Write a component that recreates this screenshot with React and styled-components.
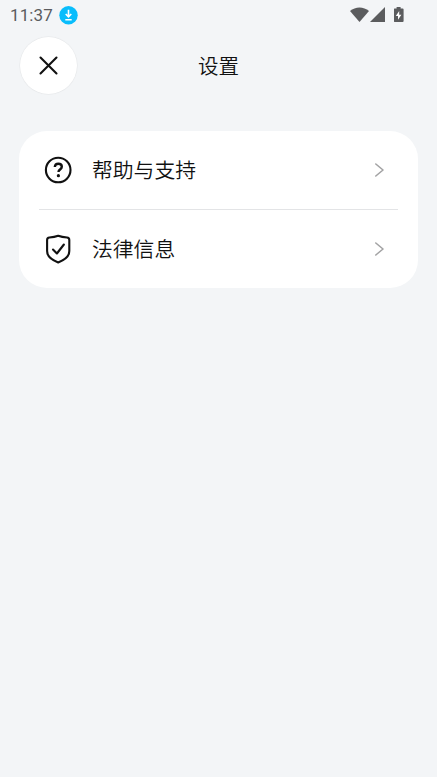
import styled, { createGlobalStyle } from "styled-components";

const GlobalStyle = createGlobalStyle`
	* {
		box-sizing: border-box;
	}
	body {
		margin: 0;
		background-color: #f3f5f7;
		font-family: "Noto Sans CJK SC", sans-serif;
	}
`;

const Container = styled.div`
	min-height: 100vh;
	background-color: #f3f5f7;
	color: #111;
`;
const StatusBar = styled.div`
	height: 30px;
	padding: 0 33px 0 10px;
	display: flex;
	justify-content: space-between;
	align-items: center;
`;
const StatusGroup = styled.div`
	display: flex;
	align-items: center;
`;
const Time = styled.span`
	width: 49px;
	font-family: Roboto, sans-serif;
	font-size: 17px;
	line-height: 20px;
	letter-spacing: 0.1px;
	color: #5b5c5e;
`;
const StatusIcon = styled.svg`
	display: block;
	margin-left: ${(props) => props.$gap || 0}px;
`;
const Header = styled.header`
	height: 71px;
	padding: 0 20px;
	display: grid;
	grid-template-columns: 57px 1fr 57px;
	align-items: center;
`;
const CloseButton = styled.button`
	width: 57px;
	height: 57px;
	padding: 0;
	display: flex;
	justify-content: center;
	align-items: center;
	border: none;
	border-radius: 50%;
	background-color: white;
	box-shadow: 0 0 1px 0.5px rgba(0, 0, 0, 0.07);
	color: #111;
	cursor: pointer;
`;
const Title = styled.h1`
	margin: 0;
	padding-bottom: 2px;
	text-align: center;
	font-size: 20.5px;
	font-weight: 350;
	line-height: 30px;
`;
const Card = styled.main`
	margin: 30px 19px 0;
	padding: 0 20px;
	border-radius: 28px;
	background-color: white;
`;
const Row = styled.div`
	height: 78px;
	padding: 0 12px 0 5px;
	display: flex;
	align-items: center;
	cursor: pointer;
`;
const Divider = styled.div`
	height: 1px;
	background-color: #e3e4e6;
`;
const Label = styled.span`
	flex: 1;
	margin-left: 20px;
	padding-bottom: 2px;
	font-size: 20.8px;
	font-weight: 350;
	line-height: 30px;
`;
const Icon = styled.svg`
	display: block;
	fill: none;
	stroke: currentColor;
	stroke-linecap: round;
	stroke-linejoin: round;
`;

const CloseIcon = () => (
	<Icon width="19" height="19" viewBox="0 0 19 19" strokeWidth="2.1">
		<path d="M1.5 1.5l16 16M17.5 1.5l-16 16" />
	</Icon>
);

const HelpIcon = () => (
	<Icon width="28" height="28" viewBox="-1 0 28 28" strokeWidth="2.1">
		<circle cx="13.2" cy="14" r="12.3" />
		<path
			d="M9.8 11C10 8.9 11.4 7.8 13.3 7.8c2.1 0 3.5 1.2 3.5 3 0 2.700-3.300 2.700-3.300 5.100"
			strokeWidth="2.4"
			strokeLinecap="butt"
		/>
		<circle cx="13.4" cy="19.7" r="1.6" fill="currentColor" stroke="none" />
	</Icon>
);

const ShieldIcon = () => (
	<Icon width="28" height="30" viewBox="-1 0 28 30" strokeWidth="2.1">
		<path d="M13.2 1.8c2.800 1 6 1.500 8.800 1.700 1.500.1 2.300 1 2.300 2.400v11.200c0 5.500-4.900 9-11.100 11.300C7 26.100 2.100 22.600 2.100 17.100V5.900c0-1.400.8-2.300 2.300-2.400 2.800-.2 6-.7 8.800-1.700z" />
		<path d="M8 15.5l3.900 4 7-9" />
	</Icon>
);

const Arrow = styled(Icon)`
	color: #a3a3a4;
`;

const items = [
	{ label: "帮助与支持", icon: <HelpIcon /> },
	{ label: "法律信息", icon: <ShieldIcon /> },
];

const App = () => {
	return (
		<Container>
			<GlobalStyle />
			<StatusBar>
				<StatusGroup>
					<Time>11:37</Time>
					<StatusIcon width="19" height="19" viewBox="0 0 19 19">
						<circle cx="9.5" cy="9.3" r="9.2" fill="#08bdfc" />
						<path
							d="M9.5 3.8v6.7M6.7 8l2.8 2.8L12.3 8M6.3 13.7h6.4"
							fill="none"
							stroke="white"
							strokeWidth="1.6"
						/>
					</StatusIcon>
				</StatusGroup>
				<StatusGroup>
					<StatusIcon width="19" height="16" viewBox="0 0 19 16" fill="#5b5c5e">
						<path d="M0 4C5.5-.8 13.5-.8 19 4L9.5 15z" />
					</StatusIcon>
					<StatusIcon $gap={1} width="15" height="16" viewBox="0 0 15 16" fill="#5b5c5e">
						<path d="M15 0v15H0z" />
					</StatusIcon>
					<StatusIcon $gap={9} width="10" height="16" viewBox="0.4 0 10 16">
						<path
							d="M3 0h4v1.5h2a1 1 0 0 1 1 1V14a1 1 0 0 1-1 1H1a1 1 0 0 1-1-1V2.5a1 1 0 0 1 1-1h2z"
							fill="#5b5c5e"
						/>
						<path d="M5.6 3.9v3.8h2.2l-3.4 5V9H2.2z" fill="white" />
					</StatusIcon>
				</StatusGroup>
			</StatusBar>
			<Header>
				<CloseButton aria-label="关闭">
					<CloseIcon />
				</CloseButton>
				<Title>设置</Title>
			</Header>
			<Card>
				{items.map((item, index) => (
					<div key={item.label}>
						{index > 0 && <Divider />}
						<Row>
							{item.icon}
							<Label>{item.label}</Label>
							<Arrow width="12" height="16" viewBox="0 0 12 16" strokeWidth="1.6">
								<path d="M1.8 2l7.200 6-7.200 6" />
							</Arrow>
						</Row>
					</div>
				))}
			</Card>
		</Container>
	);
};
export default App;
